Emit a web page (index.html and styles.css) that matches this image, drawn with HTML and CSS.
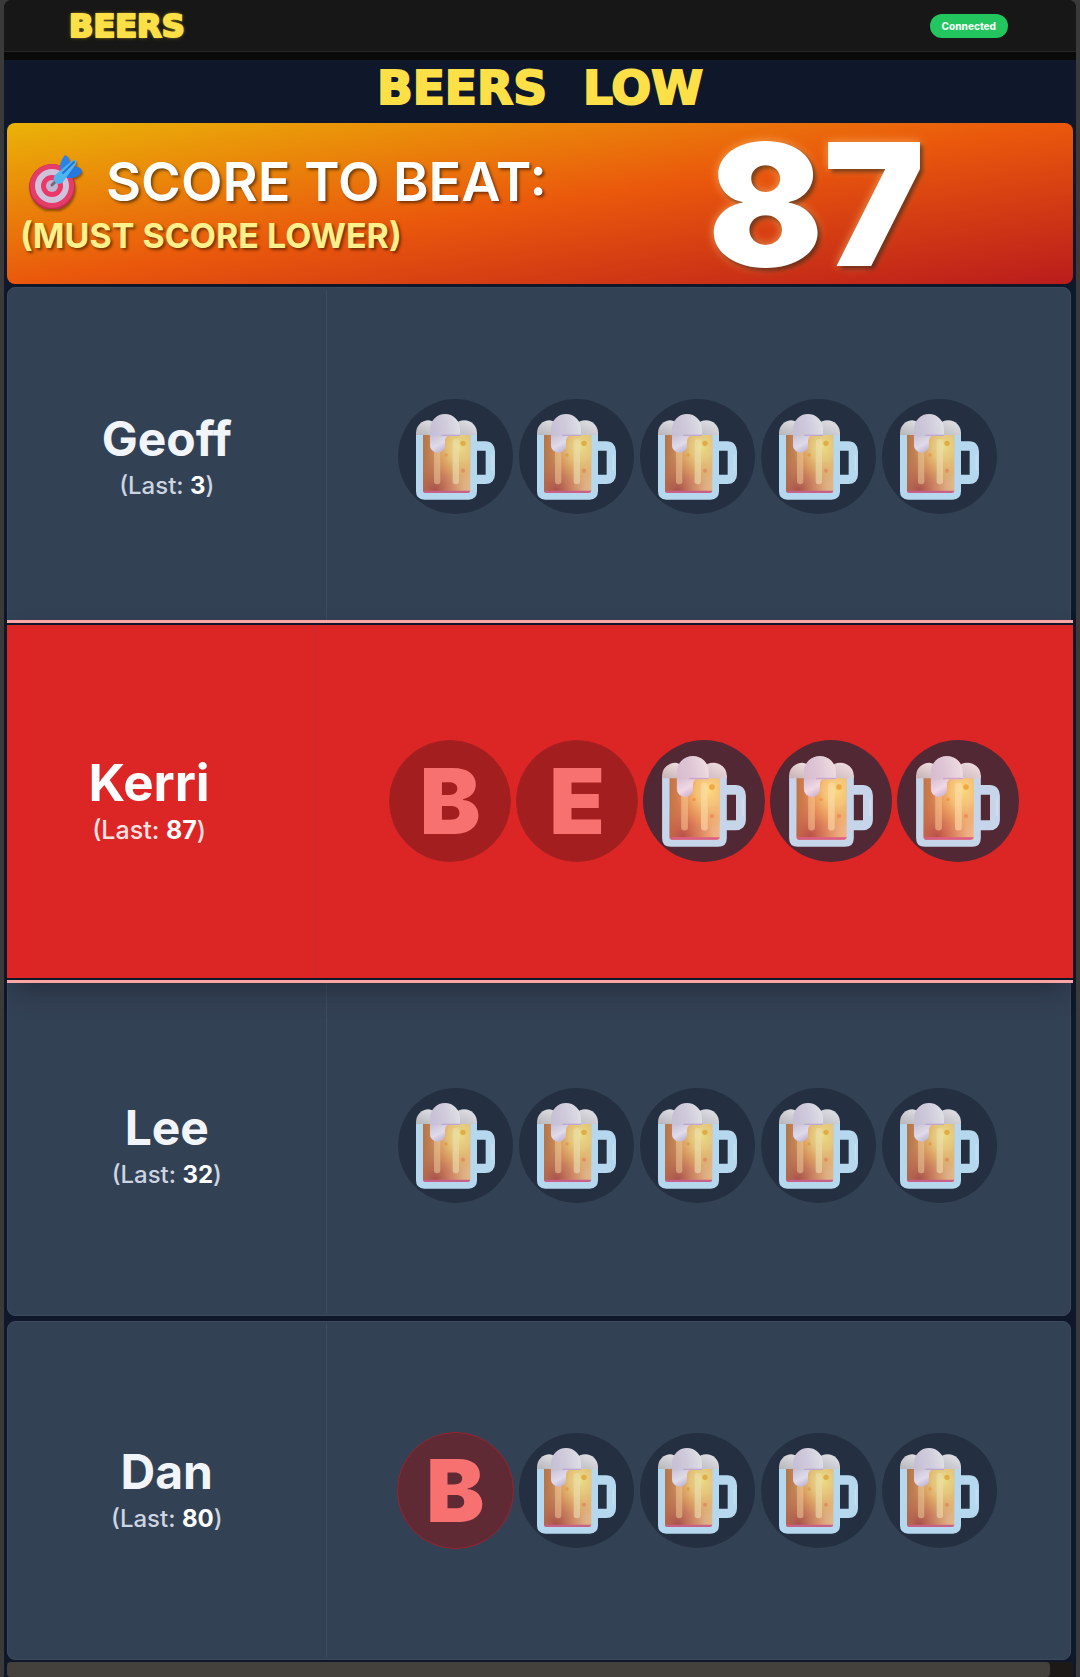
FILE: index.html
```html
<!DOCTYPE html>
<html lang="en">
<head>
<meta charset="utf-8">
<meta name="viewport" content="width=device-width, initial-scale=1">
<title>Beers Low</title>
<link rel="stylesheet" href="styles.css">
</head>
<body>
<svg class="sprite" width="0" height="0" aria-hidden="true">
  <defs>
    <linearGradient id="beer" x1="0" y1="0" x2="1" y2="0">
      <stop offset="0" stop-color="#c07c48"/>
      <stop offset="0.4" stop-color="#e89a68"/>
      <stop offset="1" stop-color="#f2c690"/>
    </linearGradient>
    <radialGradient id="beerGlow" cx="0.76" cy="0.24" r="0.62">
      <stop offset="0" stop-color="#fff08a"/>
      <stop offset="0.4" stop-color="#fbdc80" stop-opacity="0.75"/>
      <stop offset="1" stop-color="#f0a83c" stop-opacity="0"/>
    </radialGradient>
    <radialGradient id="beerBase" cx="0.26" cy="1" r="0.6">
      <stop offset="0" stop-color="#b04c48" stop-opacity="0.9"/>
      <stop offset="1" stop-color="#d87858" stop-opacity="0"/>
    </radialGradient>
    <linearGradient id="foam" x1="0" y1="0.6" x2="1" y2="0.3">
      <stop offset="0" stop-color="#d6cce2"/>
      <stop offset="0.5" stop-color="#e0d9ea"/>
      <stop offset="1" stop-color="#f2f1f6"/>
    </linearGradient>
    <linearGradient id="foamLeft" x1="0" y1="1" x2="0.6" y2="0">
      <stop offset="0" stop-color="#c4c2c6"/>
      <stop offset="1" stop-color="#f0eff1"/>
    </linearGradient>
    <linearGradient id="foamRight" x1="0" y1="1" x2="0.7" y2="0.2">
      <stop offset="0" stop-color="#cac6ce"/>
      <stop offset="1" stop-color="#ecebee"/>
    </linearGradient>
    <linearGradient id="drip" x1="0" y1="0" x2="0.6" y2="1">
      <stop offset="0" stop-color="#d9d0e5"/>
      <stop offset="0.6" stop-color="#f3ecfa"/>
      <stop offset="1" stop-color="#cfc2e4"/>
    </linearGradient>
    <symbol id="mug" viewBox="0 0 345 345">
      <path d="M230 141H262Q277 141 277 157V226Q277 241 262 241H230" fill="none" stroke="#c4e9ff" stroke-width="28"/>
      <path d="M283 170V212" stroke="#d8f2ff" stroke-width="5" stroke-linecap="round"/>
      <path d="M54 100H237V277Q237 302 212 302H79Q54 302 54 277Z" fill="#c4e9ff"/>
      <path d="M75 100H217V274Q217 282 209 282H83Q75 282 75 274Z" fill="url(#beer)"/>
      <path d="M75 100H217V276H75Z" fill="url(#beerBase)"/>
      <path d="M75 100H217V276H75Z" fill="url(#beerGlow)"/>
      <path d="M75 275H217Q216 282 209 282H83Q76 282 75 275Z" fill="#d86590"/>
      <rect x="108" y="140" width="19" height="116" rx="9" fill="#ffd9a0" fill-opacity="0.55"/>
      <rect x="164" y="120" width="19" height="136" rx="9" fill="#fff0bc" fill-opacity="0.6"/>
      <circle cx="195" cy="133" r="8" fill="#f2b844"/>
      <circle cx="195" cy="215" r="6" fill="#f09a60"/>
      <circle cx="144" cy="168" r="5" fill="#f2a64c"/>
      <path d="M54 108V102A38 38 0 0 1 92 64Q118 66 120 108Z" fill="url(#foamLeft)"/>
      <path d="M160 108Q164 64 199 64A38 38 0 0 1 237 102V108Z" fill="url(#foamRight)"/>
      <path d="M96 90A45 45 0 0 1 186 90V111H154Q141 111 141 124V138A22 22 0 0 1 96 138Z" fill="url(#foam)"/>
      <path d="M96 112H148Q141 116 141 124V138A22 22 0 0 1 96 138Z" fill="url(#drip)"/>
      <path d="M130 109H186" stroke="#cdb3dc" stroke-width="4"/>
    </symbol>
  </defs>
</svg>

<div class="app">
  <header class="topbar">
    <a class="logo" href="#">BEERS</a>
    <span class="status" role="status">Connected</span>
  </header>

  <main class="game">
    <h1 class="title"><span>BEERS</span> <span>LOW</span></h1>

    <section class="banner">
      <div class="banner-text">
        <h2 class="banner-title">
          <svg class="target" viewBox="0 0 54 54" aria-hidden="true">
            <circle cx="24" cy="32" r="23" fill="#c32c55"/>
            <circle cx="24" cy="31" r="22" fill="#e43d68"/>
            <circle cx="24" cy="31" r="17" fill="#cfc3dc"/>
            <circle cx="24" cy="31" r="11" fill="#ea3868"/>
            <circle cx="24" cy="31" r="6" fill="#c2b5cf"/>
            <path d="M24 30L31 23" stroke="#75677f" stroke-width="3" stroke-linecap="round"/>
            <path d="M33 18Q30 8 37 0Q41 1 42 8L38 15Z" fill="#2b83e6"/>
            <path d="M37 20L48 11Q54 13 54 17Q47 26 37 22Z" fill="#2478df"/>
            <path d="M27 20L44 6Q49 3 48 9L35 27Q30 31 27 27Q24 24 27 20Z" fill="#50b4ee"/>
            <path d="M35 18L46 7" stroke="#2374d8" stroke-width="2" stroke-linecap="round"/>
          </svg>
          <span>SCORE TO BEAT:</span>
        </h2>
        <p class="banner-note">(MUST SCORE LOWER)</p>
      </div>
      <strong class="banner-score">87</strong>
    </section>

    <div class="players">
      <article class="player">
        <div class="who"><h3 class="name">Geoff</h3><p class="last">(Last: <b>3</b>)</p></div>
        <div class="lives">
          <span class="life"><svg><use href="#mug"/></svg></span>
          <span class="life"><svg><use href="#mug"/></svg></span>
          <span class="life"><svg><use href="#mug"/></svg></span>
          <span class="life"><svg><use href="#mug"/></svg></span>
          <span class="life"><svg><use href="#mug"/></svg></span>
        </div>
      </article>
      <article class="player active">
        <div class="who"><h3 class="name">Kerri</h3><p class="last">(Last: <b>87</b>)</p></div>
        <div class="lives">
          <span class="life lost">B</span>
          <span class="life lost">E</span>
          <span class="life"><svg><use href="#mug"/></svg></span>
          <span class="life"><svg><use href="#mug"/></svg></span>
          <span class="life"><svg><use href="#mug"/></svg></span>
        </div>
      </article>
      <article class="player">
        <div class="who"><h3 class="name">Lee</h3><p class="last">(Last: <b>32</b>)</p></div>
        <div class="lives">
          <span class="life"><svg><use href="#mug"/></svg></span>
          <span class="life"><svg><use href="#mug"/></svg></span>
          <span class="life"><svg><use href="#mug"/></svg></span>
          <span class="life"><svg><use href="#mug"/></svg></span>
          <span class="life"><svg><use href="#mug"/></svg></span>
        </div>
      </article>
      <article class="player">
        <div class="who"><h3 class="name">Dan</h3><p class="last">(Last: <b>80</b>)</p></div>
        <div class="lives">
          <span class="life lost">B</span>
          <span class="life"><svg><use href="#mug"/></svg></span>
          <span class="life"><svg><use href="#mug"/></svg></span>
          <span class="life"><svg><use href="#mug"/></svg></span>
          <span class="life"><svg><use href="#mug"/></svg></span>
        </div>
      </article>
    </div>

    <footer class="tray"><div class="tray-bar"></div></footer>
  </main>
</div>
</body>
</html>
```

FILE: styles.css
```css
* {
  box-sizing: border-box;
  margin: 0;
}

body {
  background: #3a3a3a;
  color: #f1f5f9;
  font-family: Inter, "Liberation Sans", sans-serif;
}

.sprite {
  position: absolute;
}

.app {
  display: flex;
  flex-direction: column;
  min-height: 100vh;
  margin: 0 4px;
  overflow: hidden;
  border-radius: 8px 8px 0 0;
  background: #0a0a0a;
}

.topbar {
  display: flex;
  align-items: center;
  justify-content: space-between;
  height: 52px;
  margin-bottom: 8px;
  padding: 0 68px 0 65px;
  border-bottom: 1px solid #262626;
  background: #171717;
}

.logo {
  color: #fde047;
  font: bold 32px/48px "DejaVu Sans", sans-serif;
  text-decoration: none;
  text-shadow: 0 0 2px #fde047, 0 0 4px #a18b1c;
  -webkit-text-stroke: 2px #fde047;
}

.status {
  padding: 0 12px;
  border-radius: 12px;
  background: #22c55e;
  color: #f0fdf4;
  font-size: 10px;
  font-weight: 800;
  line-height: 24px;
}

.game {
  display: flex;
  flex: 1;
  flex-direction: column;
  padding: 0 3px;
  background: #0f172a;
}

.title {
  display: flex;
  justify-content: center;
  gap: 36px;
  padding-bottom: 7px;
  color: #fde047;
  font: bold 47px/56px "DejaVu Sans", sans-serif;
  -webkit-text-stroke: 2px #fde047;
}

.banner {
  display: grid;
  grid-template-columns: max-content 1fr;
  align-items: center;
  gap: 26px;
  height: 161px;
  margin-bottom: 3px;
  padding: 0 13px;
  border-radius: 8px;
  background: linear-gradient(to bottom right, #eab308, #ea580c, #b91c1c);
}

.banner-text {
  padding-top: 4px;
}

.banner-title {
  display: flex;
  align-items: center;
  gap: 24px;
  padding-left: 8px;
  color: #fff;
  font-size: 54px;
  font-weight: 600;
  line-height: 60px;
  text-shadow: 2px 2px 3px rgba(0, 0, 0, 0.5);
}

.target {
  width: 54px;
  height: 54px;
  filter: drop-shadow(1px 2px 1px rgba(0, 0, 0, 0.4));
}

.banner-note {
  color: #fef08a;
  font-size: 34px;
  font-weight: 700;
  line-height: 48px;
  text-shadow: 2px 2px 3px rgba(0, 0, 0, 0.5);
}

.banner-score {
  color: #fff;
  font-size: 170px;
  font-weight: 900;
  line-height: 160px;
  text-align: center;
  text-shadow: 3px 3px 4px rgba(0, 0, 0, 0.5), 0 0 10px rgba(255, 200, 120, 0.7);
}

.players {
  display: grid;
  flex: 1;
  grid-auto-rows: minmax(240px, 1fr);
  gap: 5px;
}

.player {
  display: grid;
  grid-template-columns: 3fr 7fr;
  margin-right: 2px;
  padding: 2px 0;
  border: 1px solid #3b495c;
  border-radius: 8px;
  background: #334155;
}

.who {
  display: flex;
  flex-direction: column;
  align-items: center;
  justify-content: center;
  border-right: 1px solid #3d4b5f;
}

.name {
  font-size: 48px;
  font-weight: 700;
  line-height: 58px;
}

.last {
  color: #cbd5e1;
  font-size: 24px;
  font-weight: 500;
  line-height: 36px;
}

.last b {
  color: #fff;
  font-weight: 700;
}

.lives {
  display: flex;
  align-items: center;
  justify-content: center;
  gap: 6px;
  padding-right: 2px;
}

.life {
  display: flex;
  align-items: center;
  justify-content: center;
  width: 115px;
  height: 115px;
  border-radius: 50%;
  background: rgba(30, 41, 59, 0.8);
  opacity: 0.9;
}

.life svg {
  width: 100%;
  height: 100%;
}

.life.lost {
  width: 117px;
  height: 117px;
  margin: 0 -1px;
  border: 1px solid #97232e;
  background: #5f2a33;
  color: #f87171;
  font-size: 87px;
  font-weight: 900;
  opacity: 1;
}

.player.active {
  position: relative;
  z-index: 1;
  grid-template-columns: 29fr 71fr;
  margin: -12px 0;
  border: solid #fca5a5;
  border-width: 3px 0;
  border-radius: 0;
  background: #dc2626;
  box-shadow: inset 0 2px #0f172a, inset 0 -2px #0f172a, 0 12px 24px -6px rgba(15, 15, 25, 0.4);
}

.active .who {
  padding-right: 24px;
  border-color: #b93036;
}

.active .name {
  color: #fff;
  font-size: 51px;
}

.active .last {
  color: #fee2e2;
  font-size: 25px;
}

.active .lives {
  gap: 5px;
  padding: 0 0 0 19px;
}

.active .life {
  width: 122px;
  height: 122px;
}

.active .life.lost {
  margin: 0;
  border-color: #a82022;
  background: #a31f1f;
  font-size: 91px;
}

.tray {
  height: 15px;
  margin-top: 2px;
  background: #1c1917;
}

.tray-bar {
  height: 15px;
  margin-right: 23px;
  border-radius: 4px;
  background: #44403c;
}
```
